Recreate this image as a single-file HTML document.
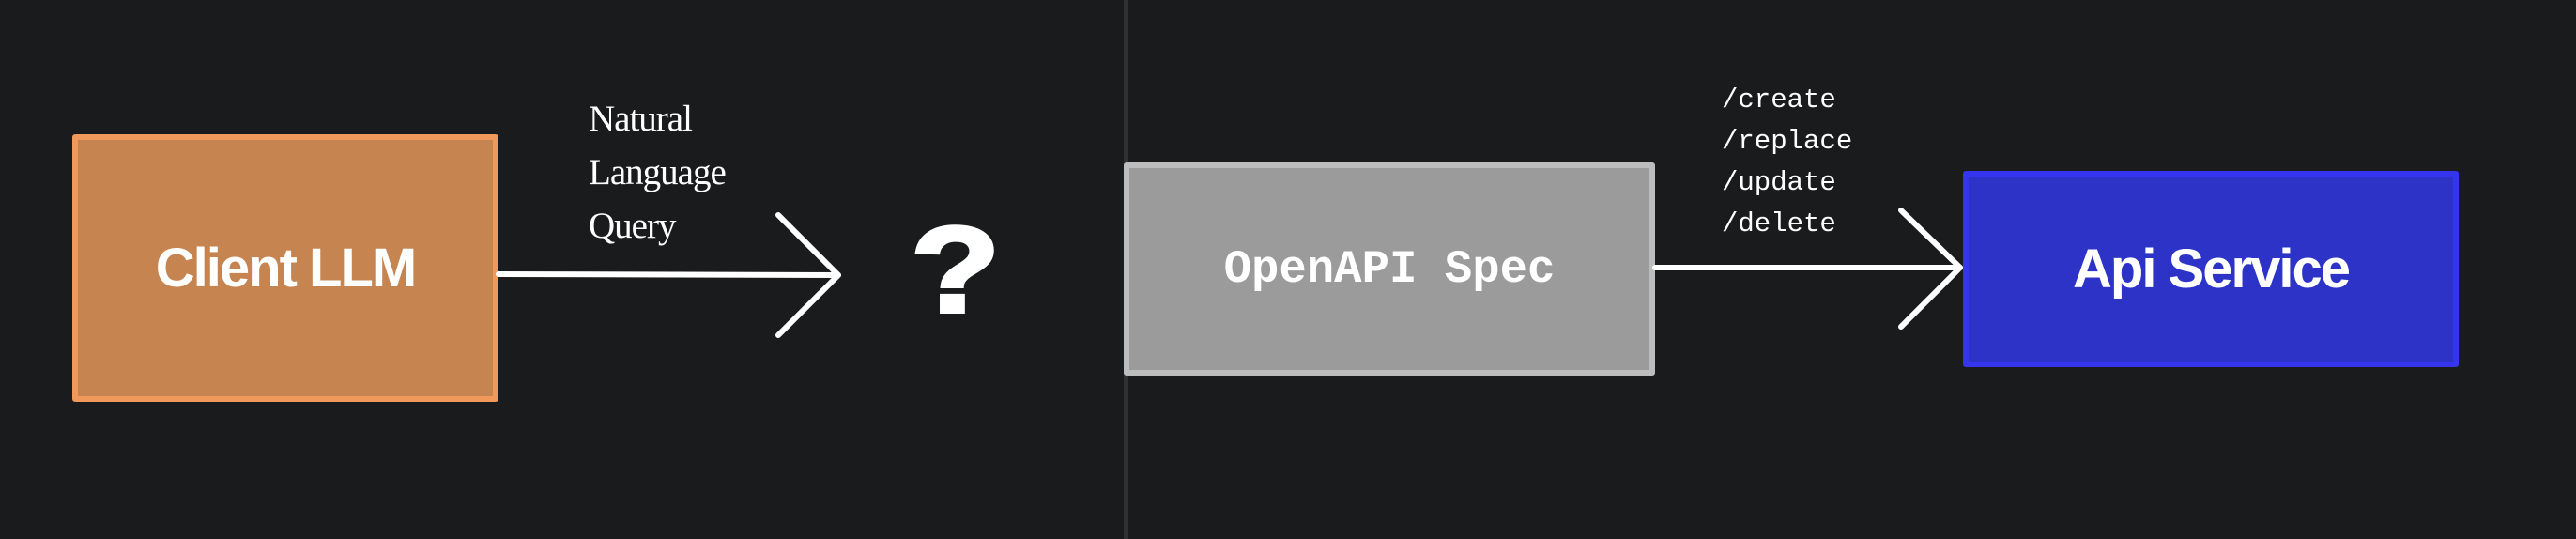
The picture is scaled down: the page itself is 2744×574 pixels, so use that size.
<!DOCTYPE html>
<html><head><style>
html,body{margin:0;padding:0;}
body{width:2744px;height:574px;background:#1a1b1c;position:relative;overflow:hidden;font-family:"Liberation Sans",sans-serif;}
.box{position:absolute;box-sizing:border-box;display:flex;align-items:center;justify-content:center;color:#fff;}
.lab{position:absolute;color:#fff;}
</style></head><body>
<div style="position:absolute;left:1197px;top:0;width:5px;height:574px;background:#303132"></div>
<div class="box" style="left:77px;top:143px;width:454px;height:285px;background:#c58450;border:6px solid #f0995a;border-radius:3px;font-weight:bold;font-size:58px;letter-spacing:-2px">Client LLM</div>
<div class="lab" style="left:627px;top:98px;font-family:'Liberation Serif',serif;font-size:39px;line-height:57px;letter-spacing:-1px">Natural<br>Language<br>Query</div>
<div class="lab" style="left:978px;top:222px;font-family:'Liberation Sans',sans-serif;font-weight:900;font-size:130px;line-height:130px;transform:scaleX(1.2);-webkit-text-stroke:4px #fff">?</div>
<div class="box" style="left:1197px;top:173px;width:566px;height:227px;background:#9b9b9b;border:6px solid #bdbdbd;border-radius:3px;font-family:'Liberation Mono',monospace;font-weight:bold;font-size:49px">OpenAPI Spec</div>
<div class="lab" style="left:1834px;top:85px;font-family:'Liberation Mono',monospace;font-size:29px;line-height:44px">/create<br>/replace<br>/update<br>/delete</div>
<div class="box" style="left:2091px;top:182px;width:528px;height:209px;background:#2e33c8;border:6px solid #3535f0;border-radius:3px;font-weight:bold;font-size:58px;letter-spacing:-2px">Api Service</div>
<svg style="position:absolute;left:0;top:0" width="2744" height="574">
<g stroke="#fff" stroke-width="6" fill="none" stroke-linecap="round" stroke-linejoin="round">
<line x1="531" y1="292" x2="893" y2="293"/>
<polyline points="829,229 893,293 829,357"/>
<line x1="1763" y1="285" x2="2088" y2="285"/>
<polyline points="2025,224 2088,285 2025,348"/>
</g></svg>
</body></html>
